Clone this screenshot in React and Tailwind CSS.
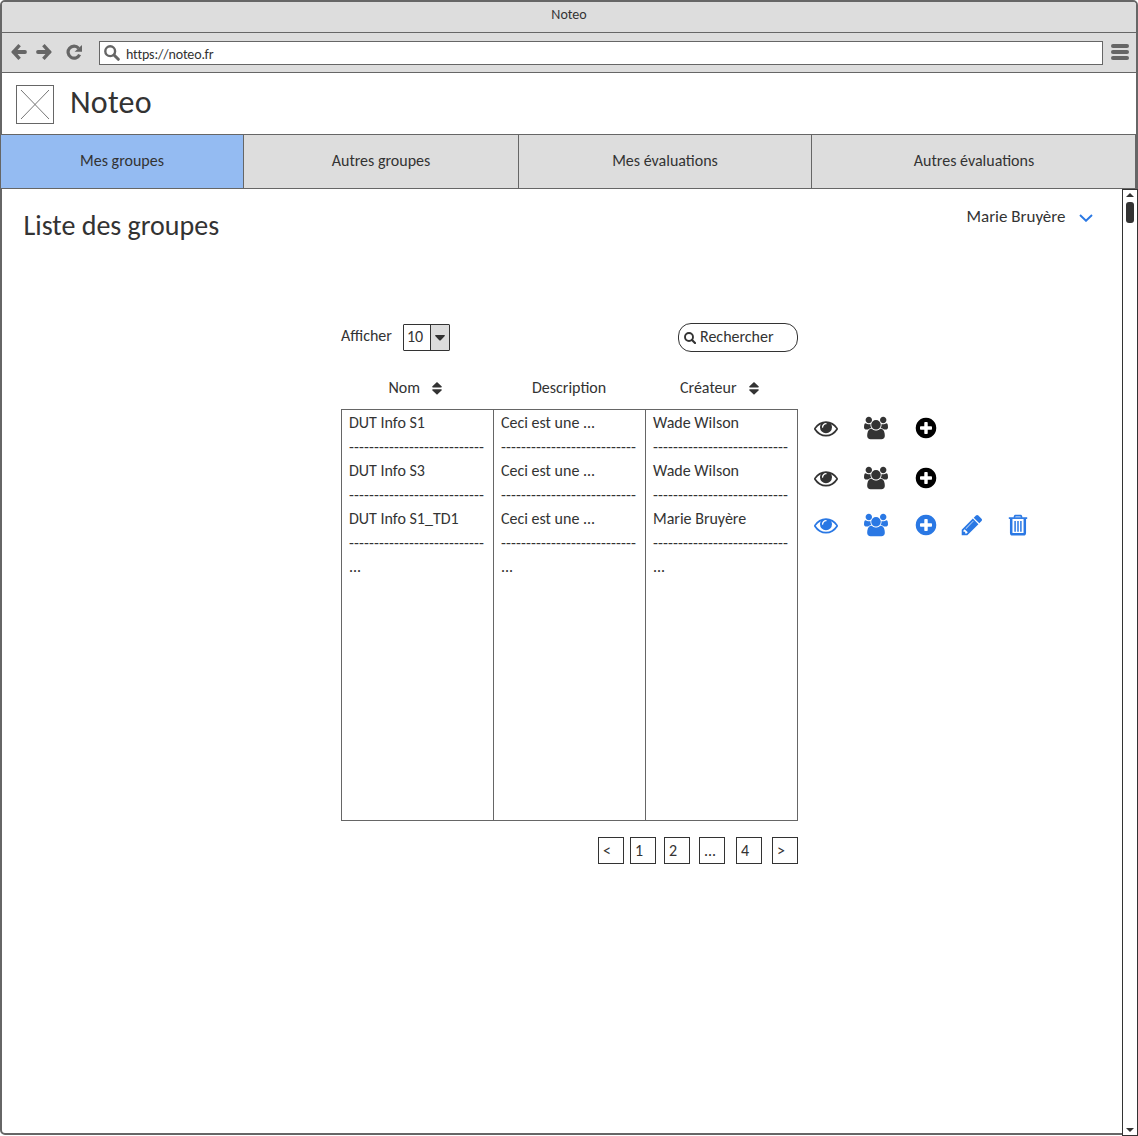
import React from "react";

const EYE =
  "M1664 960q-152-236-381-353 61 104 61 225 0 185-131.5 316.5t-316.5 131.5-316.5-131.5-131.5-316.5q0-121 61-225-229 117-381 353 133 205 333.5 326.5t434.5 121.5 434.5-121.5 333.5-326.5zm-720-384q0-20-14-34t-34-14q-125 0-214.5 89.5t-89.5 214.5q0 20 14 34t34 14 34-14 14-34q0-86 61-147t147-61q20 0 34-14t14-34zm848 384q0 34-20 69-140 230-376.5 368.5t-499.5 138.5-499.5-139-376.5-368q-20-35-20-69t20-69q140-229 376.5-368t499.5-139 499.5 139 376.5 368q20 35 20 69z";
const USERS =
  "M593 896q-162 5-265 128h-134q-82 0-138-40.5t-56-118.5q0-353 124-353 6 0 43.5 21t97.5 42.5 119 21.5q67 0 133-23-5 37-5 66 0 139 81 256zm1071 637q0 120-73 189.5t-194 69.5h-874q-121 0-194-69.5t-73-189.5q0-53 3.5-103.5t14-109 26.5-108.5 43-97.5 62-81 85.5-53.5 111.5-20q10 0 43 21.5t73 48 107 48 135 21.5 135-21.5 107-48 73-48 43-21.5q61 0 111.5 20t85.5 53.5 62 81 43 97.5 26.5 108.5 14 109 3.5 103.5zm-1024-1277q0 106-75 181t-181 75-181-75-75-181 75-181 181-75 181 75 75 181zm704 384q0 159-112.5 271.5t-271.5 112.5-271.5-112.5-112.5-271.5 112.5-271.5 271.5-112.5 271.5 112.5 112.5 271.5zm576 225q0 78-56 118.5t-138 40.5h-134q-103-123-265-128 81-117 81-256 0-29-5-66 66 23 133 23 59 0 119-21.5t97.5-42.5 43.5-21q124 0 124 353zm-128-609q0 106-75 181t-181 75-181-75-75-181 75-181 181-75 181 75 75 181z";
const PLUS =
  "M1344 960v-128q0-26-19-45t-45-19h-256v-256q0-26-19-45t-45-19h-128q-26 0-45 19t-19 45v256h-256q-26 0-45 19t-19 45v128q0 26 19 45t45 19h256v256q0 26 19 45t45 19h128q26 0 45-19t19-45v-256h256q26 0 45-19t19-45zm320-64q0 209-103 385.5t-279.5 279.5-385.5 103-385.5-103-279.5-279.5-103-385.5 103-385.5 279.5-279.5 385.5-103 385.5 103 279.5 279.5 103 385.5z";
const PENCIL =
  "M491 1536l91-91-235-235-91 91v107h128v128h107zm523-928q0-22-22-22-10 0-17 7l-542 542q-7 7-7 17 0 22 22 22 10 0 17-7l542-542q7-7 7-17zm-54-192l416 416-832 832h-416v-416zm683 96q0 53-37 90l-166 166-416-416 166-165q36-38 90-38 53 0 91 38l235 234q37 39 37 91z";

function Icon({ d, className = "", viewBox = "0 0 1792 1792" }) {
  return (
    <svg viewBox={viewBox} className={`size-6 shrink-0 fill-current ${className}`}>
      <path d={d} />
    </svg>
  );
}

function TrashIcon({ className = "" }) {
  return (
    <svg viewBox="0 0 24 24" className={`size-6 shrink-0 fill-none stroke-current ${className}`}>
      <path d="M2.8 5.1H21.2" className="stroke-[1.7]" />
      <path d="M8.2 4.6 9 2.6H15L15.8 4.6" className="stroke-[1.6]" strokeLinejoin="round" />
      <path d="M5.2 5.5V20Q5.2 21.3 6.5 21.3H17.5Q18.8 21.3 18.8 20V5.5" className="stroke-[2.5]" />
      <path d="M9.1 8V18.8M12 8V18.8M14.9 8V18.8" className="stroke-[1.5]" />
    </svg>
  );
}

function Actions({ own = false, className = "" }) {
  return (
    <div className={`flex h-6 items-center ${own ? "text-[#2a78e4]" : "text-[#333]"} ${className}`}>
      <Icon d={EYE} />
      <Icon d={USERS} viewBox="0 -64 1920 1920" className="ml-[26px]" />
      <Icon d={PLUS} className={own ? "ml-[25.5px]" : "ml-[25.5px] text-black"} />
      {own && <Icon d={PENCIL} className="ml-[22.5px]" />}
      {own && <TrashIcon className="ml-[22px]" />}
    </div>
  );
}

function SortIcon({ className }) {
  return (
    <svg viewBox="0 0 10 13" className={`h-[13px] w-[10px] fill-[#333] ${className}`}>
      <path d="M5 0 9.8 4.6Q10 5.6 9 5.6H1Q0 5.6 .2 4.6ZM5 12.8 9.8 8.2Q10 7.2 9 7.2H1Q0 7.2 .2 8.2Z" />
    </svg>
  );
}

function Column({ cells }) {
  return (
    <div className="w-[152px] border-r border-[#666] pt-px pl-[7px]">
      {cells.map((cell, i) => (
        <React.Fragment key={i}>
          <div className="h-6 whitespace-nowrap">{cell}</div>
          {i < cells.length - 1 && (
            <div className="h-6 whitespace-nowrap tracking-[0.1px]">{"-".repeat(27)}</div>
          )}
        </React.Fragment>
      ))}
    </div>
  );
}

function PageButton({ children, className = "" }) {
  return (
    <button className={`flex h-[27px] w-[26px] border border-[#333] pl-1 leading-[25px] ${className}`}>
      {children}
    </button>
  );
}

const tab = "flex items-center justify-center border-r border-[#666] pb-px";

export default function App() {
  return (
    <div className="h-[1136px] w-[1138px] bg-white font-['Carlito','Lato',sans-serif] text-base leading-6 text-[#333]">
      <div className="h-[1135px] rounded-[5px] border-2 border-[#666]">
        <div className="flex h-[31px] justify-center rounded-t-[3px] border-b border-[#666] bg-[#ddd] text-sm leading-[25px]">
          <span>Noteo</span>
        </div>

        <div className="flex h-10 items-center border-b border-[#666] bg-[#ddd]">
          <svg viewBox="0 0 16 16" className="-mt-px ml-[9px] size-4 fill-none stroke-[#666]">
            <path d="M8.6 1.2 2.4 8 8.6 14.8" className="stroke-[3.4]" />
            <path d="M3 8h11" className="stroke-[3.8]" strokeLinecap="round" />
          </svg>
          <svg viewBox="0 0 16 16" className="-mt-px ml-[9px] size-4 fill-none stroke-[#666]">
            <path d="M7.4 1.2 13.6 8 7.4 14.8" className="stroke-[3.4]" />
            <path d="M13 8H2" className="stroke-[3.8]" strokeLinecap="round" />
          </svg>
          <svg viewBox="0 0 16 16" className="-mt-px ml-[14px] size-4">
            <path d="M12.6 4.2A6 6 0 1 0 13.6 10.6" className="fill-none stroke-[#666] stroke-[3.2]" />
            <path d="M16 1v6.8H8.6Z" className="fill-[#666]" />
          </svg>
          <div className="ml-[17px] flex h-6 w-[1004px] border border-[#666] bg-white">
            <svg viewBox="0 0 16 16" className="mt-[3px] ml-1 size-4 fill-none stroke-[#666]">
              <circle cx="6.2" cy="6.2" r="4.9" className="stroke-[2.4]" />
              <path d="m10 10 4.3 4.3" className="stroke-[3]" strokeLinecap="round" />
            </svg>
            <span className="ml-1.5 text-sm leading-[26px] tracking-[-0.15px]">https://noteo.fr</span>
          </div>
          <div className="-mt-px ml-[7.5px] flex flex-col gap-[2px]">
            <div className="h-1 w-[18px] rounded-full bg-[#666]" />
            <div className="h-1 w-[18px] rounded-full bg-[#666]" />
            <div className="h-1 w-[18px] rounded-full bg-[#666]" />
          </div>
        </div>

        <header className="flex h-[61px]">
          <svg viewBox="0 0 38 39" className="mt-3 ml-[14px] h-[39px] w-[38px] fill-none stroke-[#666]">
            <rect x=".5" y=".5" width="37" height="38" />
            <path d="m5 5 28 29M33 5 5 34" className="stroke-[0.9]" />
          </svg>
          <span className="ml-4 text-[32px] leading-[59px] tracking-[0.2px]">Noteo</span>
        </header>

        <nav className="-ml-[2px] flex h-[55px] w-[1136px] border-y border-l border-[#666] bg-[#ddd]">
          <div className={`${tab} w-[243px] bg-[#94bbf2]`}>Mes groupes</div>
          <div className={`${tab} w-[275px]`}>Autres groupes</div>
          <div className={`${tab} w-[293px]`}>Mes évaluations</div>
          <div className={`${tab} w-[324px] pl-px`}>Autres évaluations</div>
        </nav>

        <div className="-mr-[2px] flex h-[947px]">
          <main className="flex-1">
            <div className="flex h-[134px] items-start justify-between">
              <h1 className="ml-[21.5px] pt-[15px] text-[28px] leading-[44px]">Liste des groupes</h1>
              <div className="mt-4 mr-[29.5px] flex items-center">
                <span className="text-[17px]">Marie Bruyère</span>
                <svg viewBox="0 0 14 8" className="mt-0.5 ml-[13px] h-2 w-[14px] fill-none stroke-[#2a78e4] stroke-[1.9]">
                  <path d="m1 1 6 5.8L13 1" />
                </svg>
              </div>
            </div>

            <div className="ml-[339px] w-[457px]">
              <div className="flex h-[29px] items-start">
                <span className="leading-[26px]">Afficher</span>
                <div className="mt-px ml-[11.5px] flex h-[27px] w-[47px] rounded-[1px] border border-[#333]">
                  <span className="w-[27px] border-r border-[#333] pl-[2.5px] leading-6">10</span>
                  <span className="flex flex-1 items-center justify-center bg-[#ddd]">
                    <svg viewBox="0 0 10 6" className="h-1.5 w-[10px] fill-[#333]">
                      <path d="M0 .8Q0 0 1 0H9Q10 0 10 .8L6 5Q5 6 4 5Z" />
                    </svg>
                  </span>
                </div>
                <div className="ml-auto flex h-[29px] w-[120px] items-center rounded-[13px] border border-[#333] pl-[5px]">
                  <svg viewBox="0 0 12 12" className="mt-px size-3 fill-none stroke-[#333]">
                    <circle cx="5" cy="5" r="4" className="stroke-[1.9]" />
                    <path d="m8 8 3 3" className="stroke-[2.1]" strokeLinecap="round" />
                  </svg>
                  <span className="ml-1 pb-px">Rechercher</span>
                </div>
              </div>

              <div className="mt-[23px] flex h-6 leading-[26px]">
                <div className="flex w-[152px] pl-[47.5px]">
                  Nom
                  <SortIcon className="mt-[7px] ml-3" />
                </div>
                <div className="w-[152px] pl-[39px]">Description</div>
                <div className="flex pl-[35px]">
                  Créateur
                  <SortIcon className="mt-[7px] ml-3" />
                </div>
              </div>
            </div>

            <div className="mt-[10px] ml-[339px] flex items-start">
              <div className="flex h-[412px] w-[457px] border-y border-l border-[#666]">
                <Column cells={["DUT Info S1", "DUT Info S3", "DUT Info S1_TD1", "..."]} />
                <Column cells={["Ceci est une ...", "Ceci est une ...", "Ceci est une ...", "..."]} />
                <Column cells={["Wade Wilson", "Wade Wilson", "Marie Bruyère", "..."]} />
              </div>
              <div className="ml-4 pt-[7px]">
                <Actions />
                <Actions className="mt-[26px]" />
                <Actions own className="mt-[23px]" />
              </div>
            </div>

            <div className="mt-4 ml-[339px] flex w-[457px] justify-end">
              <PageButton>&lt;</PageButton>
              <PageButton className="ml-1.5">1</PageButton>
              <PageButton className="ml-2">2</PageButton>
              <PageButton className="ml-[9px]">...</PageButton>
              <PageButton className="ml-[11px]">4</PageButton>
              <PageButton className="ml-[10px]">&gt;</PageButton>
            </div>
          </main>

          <div className="flex w-4 flex-col items-center border border-[#333] bg-white">
            <svg viewBox="0 0 8 4" className="mt-[3px] h-1 w-2 fill-[#333]">
              <path d="M4 0 8 4H0Z" />
            </svg>
            <div className="mt-[5px] h-[21px] w-2 rounded-[3px] bg-[#333]" />
            <svg viewBox="0 0 8 4" className="mt-auto mb-[3px] h-1 w-2 fill-[#333]">
              <path d="M0 0h8L4 4Z" />
            </svg>
          </div>
        </div>
      </div>
    </div>
  );
}
